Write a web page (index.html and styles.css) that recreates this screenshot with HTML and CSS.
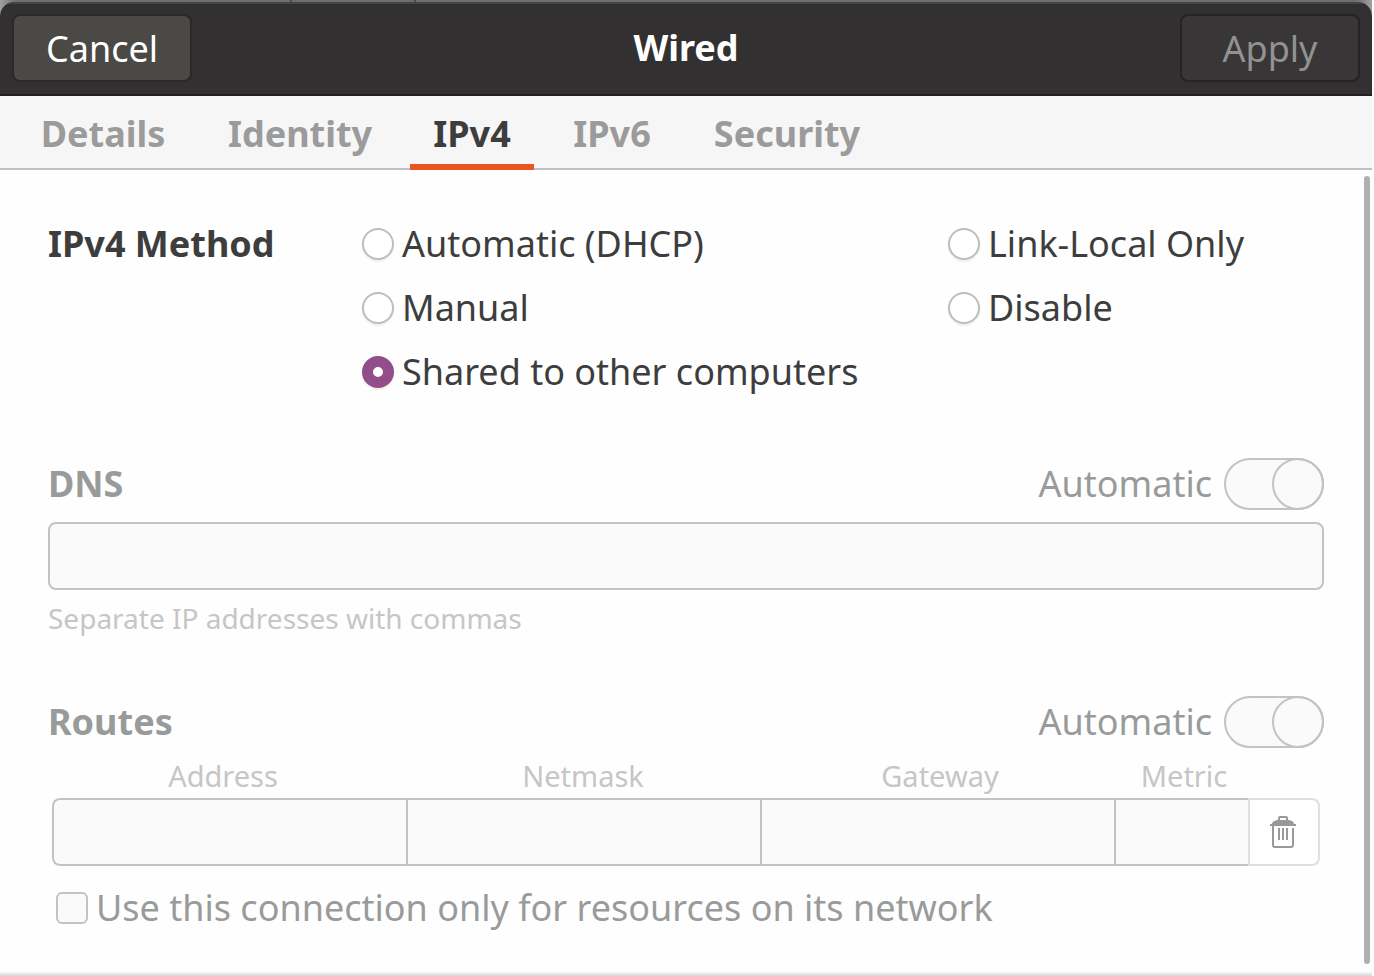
FILE: index.html
```html
<!DOCTYPE html>
<html lang="en">
<head>
<meta charset="utf-8">
<title>Wired</title>
<link rel="stylesheet" href="styles.css">
</head>
<body>
<div class="backdrop">
<div class="window">
  <header class="titlebar">
    <button class="btn" type="button">Cancel</button>
    <h1 class="title">Wired</h1>
    <button class="btn" type="button" disabled>Apply</button>
  </header>
  <nav class="tabs" role="tablist">
    <button class="tab" type="button" role="tab">Details</button>
    <button class="tab" type="button" role="tab">Identity</button>
    <button class="tab active" type="button" role="tab" aria-selected="true">IPv4</button>
    <button class="tab" type="button" role="tab">IPv6</button>
    <button class="tab" type="button" role="tab">Security</button>
  </nav>
  <main class="pane">
    <form class="content">
      <section class="method">
        <h2 class="heading">IPv4 Method</h2>
        <div class="options">
          <label class="choice"><input class="radio" type="radio" name="method">Automatic (DHCP)</label>
          <label class="choice"><input class="radio" type="radio" name="method">Manual</label>
          <label class="choice"><input class="radio" type="radio" name="method" checked>Shared to other computers</label>
        </div>
        <div class="options">
          <label class="choice"><input class="radio" type="radio" name="method">Link-Local Only</label>
          <label class="choice"><input class="radio" type="radio" name="method">Disable</label>
        </div>
      </section>
      <section class="dns disabled">
        <div class="section-head">
          <h2 class="heading">DNS</h2>
          <label class="auto">Automatic<input class="switch" type="checkbox" role="switch" checked disabled></label>
        </div>
        <input class="entry" type="text" aria-label="DNS" aria-describedby="dns-hint" disabled>
        <p class="hint" id="dns-hint">Separate IP addresses with commas</p>
      </section>
      <section class="routes disabled">
        <div class="section-head">
          <h2 class="heading">Routes</h2>
          <label class="auto">Automatic<input class="switch" type="checkbox" role="switch" checked disabled></label>
        </div>
        <table class="route-table">
          <colgroup><col><col><col><col class="col-metric"><col class="col-delete"></colgroup>
          <thead>
            <tr><th class="th-address" id="c-address">Address</th><th id="c-netmask">Netmask</th><th class="th-gateway" id="c-gateway">Gateway</th><th class="th-metric" id="c-metric">Metric</th><td></td></tr>
          </thead>
          <tbody>
            <tr>
              <td><input class="cell first" type="text" aria-labelledby="c-address" disabled></td>
              <td><input class="cell" type="text" aria-labelledby="c-netmask" disabled></td>
              <td><input class="cell" type="text" aria-labelledby="c-gateway" disabled></td>
              <td><input class="cell" type="text" aria-labelledby="c-metric" disabled></td>
              <td><button class="delete" type="button" aria-label="Delete route" disabled><svg width="26" height="32" viewBox="0 0 26 32" fill="none" stroke="currentColor" stroke-width="2"><path d="M9 5V2q0-1 1-1h6q1 0 1 1v3"/><path fill="currentColor" stroke="none" d="M7 4h12q5 1 5 4h2v2H0V8h2q0-3 5-4z"/><path d="M3 10v19q0 2 2 2h16q2 0 2-2V12M9 12v12M13 12v12M17 12v12"/></svg></button></td>
            </tr>
          </tbody>
        </table>
        <label class="choice only"><input class="check" type="checkbox" disabled>Use this connection only for resources on its network</label>
      </section>
    </form>
    <div class="scrollbar"></div>
  </main>
</div>
</div>
</body>
</html>
```
FILE: styles.css
```css
*, *::before { box-sizing: border-box; }
body {
  margin: 0;
  background: #fff;
  color: #3d3d3d;
  font: 36px/48px "Noto Sans", sans-serif;
}
h1, h2, p { margin: 0; font-size: inherit; }
button, input { margin: 0; font: inherit; color: inherit; }

.backdrop {
  min-height: 100vh;
  margin-right: 2px;
  padding-top: 2px;
  display: flex;
  background:
    linear-gradient(#4c4c4c, #4c4c4c) 290px 0 / 2px 2px no-repeat,
    linear-gradient(#4c4c4c, #4c4c4c) 414px 0 / 2px 2px no-repeat,
    linear-gradient(90deg, #a0a0a0, #6e6e6e 16px, #6e6e6e calc(100% - 16px), #a0a0a0);
}
.window {
  flex: 1;
  min-width: 0;
  display: flex;
  flex-direction: column;
  border-radius: 14px 14px 0 0;
  overflow: hidden;
  background: #fefefe;
  border-bottom: 2px solid #dedede;
}

.titlebar {
  display: flex;
  justify-content: space-between;
  align-items: center;
  padding: 10px 12px 12px;
  background: #323030;
  border-top: 2px solid #464545;
  border-bottom: 2px solid #231f20;
  color: #fff;
}
.title { font-weight: 700; }
.btn {
  width: 180px;
  height: 68px;
  padding: 2px 0 0;
  border: 2px solid #2a2828;
  border-radius: 8px;
  background: #4a4946;
}
.btn:disabled { background: #383636; border-color: #252323; color: #929292; }

.tabs {
  display: grid;
  grid-template-columns: 174px 188px 124px 124px 194px;
  column-gap: 16px;
  padding-left: 16px;
  background: #f6f6f6;
  border-bottom: 2px solid #c0c0c0;
}
.tab {
  height: 74px;
  margin-bottom: -2px;
  padding: 2px 0 0;
  border: 0;
  border-top: 6px solid transparent;
  border-bottom: 6px solid transparent;
  background: none;
  color: #9b9b9b;
  font-weight: 700;
}
.tab.active { color: #3d3d3d; border-bottom-color: #e95420; }

.pane { flex: 1; display: flex; border-bottom: 2px solid #f1f1f1; }
.content { flex: 1; min-width: 0; padding: 50px 40px 40px 48px; }
.scrollbar { width: 6px; margin: 6px 2px 8px 0; border-radius: 3px; background: #b0b0b0; }

.heading { font-weight: 700; }
.method { display: grid; grid-template-columns: 314px 1fr 376px; }
.options { display: flex; flex-direction: column; gap: 16px; }
.choice { display: flex; align-items: center; gap: 8px; white-space: nowrap; }

.radio, .check, .switch {
  appearance: none;
  flex: none;
  border: 2px solid #bdbdbd;
  background: #fff;
}
.radio {
  width: 32px;
  height: 32px;
  border-radius: 50%;
  box-shadow: 0 2px 2px #00000010;
}
.radio:checked { border: 11px solid #924d8b; }
.check { width: 32px; height: 32px; border-radius: 6px; }

.disabled { color: #999b9b; }
.disabled .check, .disabled .switch { border-color: #c3c3c3; background: #fafafa; }
.section-head { display: flex; justify-content: space-between; align-items: center; }
.auto { display: flex; align-items: center; gap: 12px; }
.switch { display: flex; justify-content: flex-end; width: 100px; height: 52px; border-radius: 26px; }
.switch::before {
  content: "";
  width: 52px;
  height: 52px;
  flex: none;
  margin: -2px;
  border: 2px solid #c3c3c3;
  border-radius: 50%;
}

.dns { margin-top: 62px; }
.entry {
  display: block;
  width: 100%;
  height: 68px;
  margin: 12px 0 10px;
  padding: 0 16px;
  border: 2px solid #c3c3c3;
  border-radius: 8px;
  background: #fafafa;
}
.hint, th { font-size: 29px; font-weight: 400; color: #c5c6c6; }
.hint { font-size: 28px; line-height: 36px; }

.routes { margin-top: 60px; }
.route-table {
  width: calc(100% - 8px);
  margin: 0 4px;
  table-layout: fixed;
  border-collapse: collapse;
}
.col-metric { width: 134px; }
.col-delete { width: 72px; }
th { padding: 8px 0 2px; line-height: 40px; }
.th-address { padding-right: 12px; }
.th-gateway, .th-metric { padding-left: 6px; }
.route-table td { padding: 0; }
.cell {
  display: block;
  width: 100%;
  height: 68px;
  padding: 0 12px;
  border: 2px solid #c3c3c3;
  border-width: 2px 0 2px 2px;
  border-radius: 0;
  background: #fafafa;
}
.cell.first { border-radius: 8px 0 0 8px; }
.delete {
  display: flex;
  align-items: center;
  justify-content: center;
  width: 100%;
  height: 68px;
  padding: 0 2px 0 0;
  border: 2px solid #e0e0e0;
  border-radius: 0 8px 8px 0;
  background: #fff;
  color: #999;
}
.only { margin: 18px 8px 0; }
```
